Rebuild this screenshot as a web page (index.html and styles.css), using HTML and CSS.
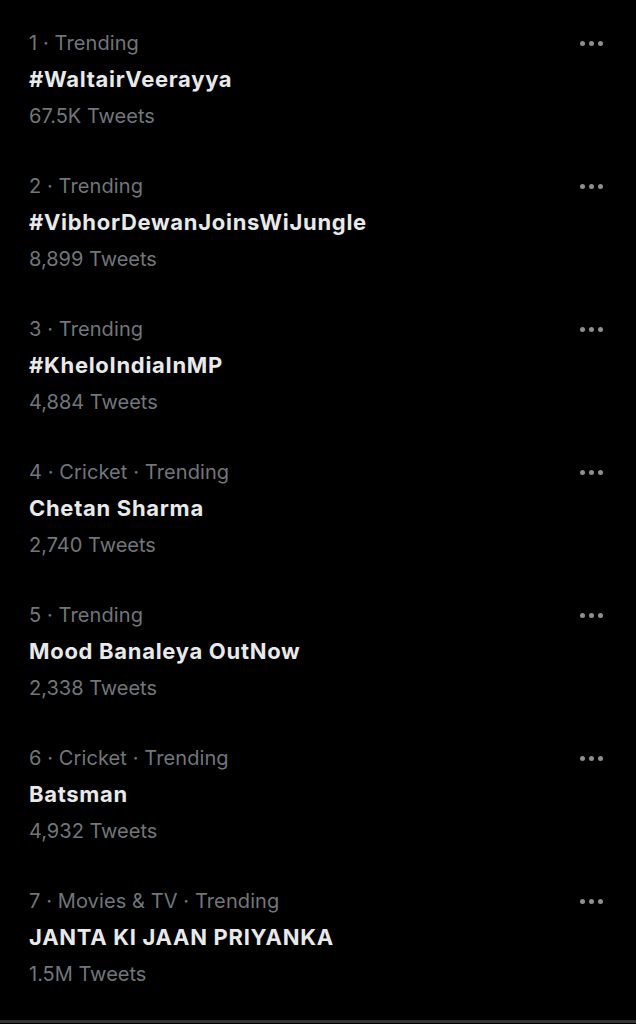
FILE: index.html
```html
<!DOCTYPE html>
<html lang="en">
<head>
    <meta charset="UTF-8">
    <meta name="viewport" content="width=device-width, initial-scale=1.0">
    <title>Trending</title>
    <link rel="stylesheet" href="styles.css">
</head>
<body>
    <div class="trends">
        <div class="trend">
            <div class="trend-text">
                <div class="meta">1 · Trending</div>
                <div class="name">#WaltairVeerayya</div>
                <div class="count">67.5K Tweets</div>
            </div>
            <div class="more"><span></span><span></span><span></span></div>
        </div>
        <div class="trend">
            <div class="trend-text">
                <div class="meta">2 · Trending</div>
                <div class="name">#VibhorDewanJoinsWiJungle</div>
                <div class="count">8,899 Tweets</div>
            </div>
            <div class="more"><span></span><span></span><span></span></div>
        </div>
        <div class="trend">
            <div class="trend-text">
                <div class="meta">3 · Trending</div>
                <div class="name">#KheloIndiaInMP</div>
                <div class="count">4,884 Tweets</div>
            </div>
            <div class="more"><span></span><span></span><span></span></div>
        </div>
        <div class="trend">
            <div class="trend-text">
                <div class="meta">4 · Cricket · Trending</div>
                <div class="name">Chetan Sharma</div>
                <div class="count">2,740 Tweets</div>
            </div>
            <div class="more"><span></span><span></span><span></span></div>
        </div>
        <div class="trend">
            <div class="trend-text">
                <div class="meta">5 · Trending</div>
                <div class="name">Mood Banaleya OutNow</div>
                <div class="count">2,338 Tweets</div>
            </div>
            <div class="more"><span></span><span></span><span></span></div>
        </div>
        <div class="trend">
            <div class="trend-text">
                <div class="meta">6 · Cricket · Trending</div>
                <div class="name">Batsman</div>
                <div class="count">4,932 Tweets</div>
            </div>
            <div class="more"><span></span><span></span><span></span></div>
        </div>
        <div class="trend">
            <div class="trend-text">
                <div class="meta">7 · Movies &amp; TV · Trending</div>
                <div class="name">JANTA KI JAAN PRIYANKA</div>
                <div class="count">1.5M Tweets</div>
            </div>
            <div class="more"><span></span><span></span><span></span></div>
        </div>
    </div>
    <div class="bottom-bar"></div>
</body>
</html>
```

FILE: styles.css
```css
body {
    margin: 0;
    background-color: #000;
    font-family: Inter, "Noto Sans", sans-serif;
    color: #e7e9ea;
}
.trends {
    display: flex;
    flex-direction: column;
}
.trend {
    height: 143px;
    box-sizing: border-box;
    padding: 25px 0 8px 29px;
    display: flex;
    justify-content: space-between;
    align-items: flex-start;
}
.meta {
    font-size: 20px;
    line-height: 36px;
    letter-spacing: 0.1px;
    color: #71767b;
}
.name {
    font-size: 22px;
    line-height: 37px;
    font-weight: 700;
    letter-spacing: 0.7px;
}
.count {
    font-size: 20px;
    line-height: 37px;
    color: #71767b;
}
.more {
    display: flex;
    gap: 4px;
    margin: 16px 33px 0 0;
}
.more span {
    width: 5px;
    height: 5px;
    border-radius: 50%;
    background-color: #8b8f93;
}
.bottom-bar {
    height: 3px;
    margin-top: 19px;
    background-color: #333;
}
```
